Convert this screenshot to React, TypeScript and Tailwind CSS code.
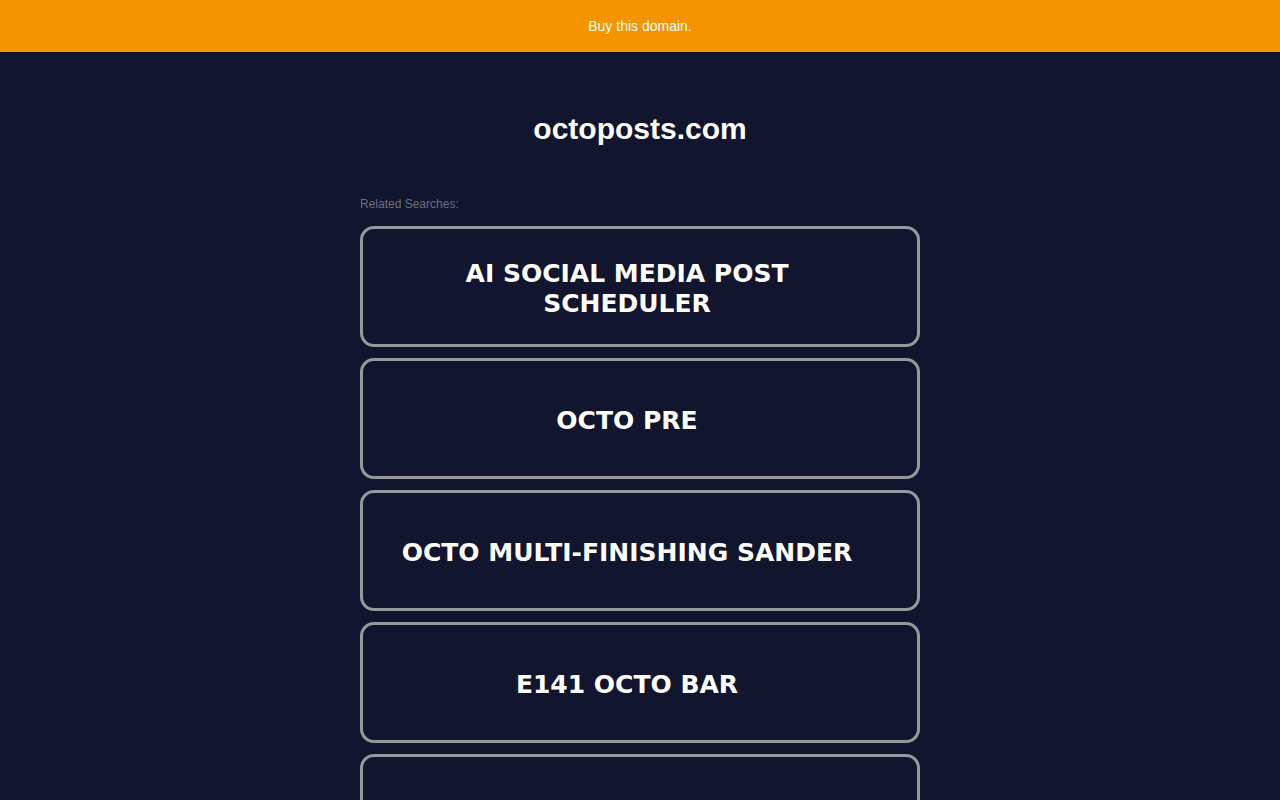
const searches = [
  "AI SOCIAL MEDIA POST SCHEDULER",
  "OCTO PRE",
  "OCTO MULTI-FINISHING SANDER",
  "E141 OCTO BAR",
  "OCTO SOCIAL MEDIA TOOL",
];

export default function App() {
  return (
    <div className="min-h-screen bg-[#11152d] font-['Liberation_Sans',Arial,sans-serif]">
      <div className="h-[52px] bg-[#f39400] flex items-center justify-center">
        <span className="text-[14px] text-white">Buy this domain.</span>
      </div>

      <div className="w-[560px] mx-auto">
        <h1 className="text-center text-white font-bold text-[30px] leading-none pt-[62px] pb-[51px]">
          octoposts.com
        </h1>

        <p className="text-[12px] text-[#6b6f85] mb-[13px]">Related Searches:</p>

        <div className="flex flex-col gap-[11px]">
          {searches.map((s) => (
            <div
              key={s}
              className="h-[121px] border-[3.5px] border-[#96989c] rounded-[14px] flex items-center justify-center pt-[4px] pl-[36px] pr-[62px]"
            >
              <span className="text-white font-bold text-[25px] leading-[30px] text-center font-['DejaVu_Sans',Verdana,sans-serif]">
                {s}
              </span>
            </div>
          ))}
        </div>
      </div>
    </div>
  );
}
